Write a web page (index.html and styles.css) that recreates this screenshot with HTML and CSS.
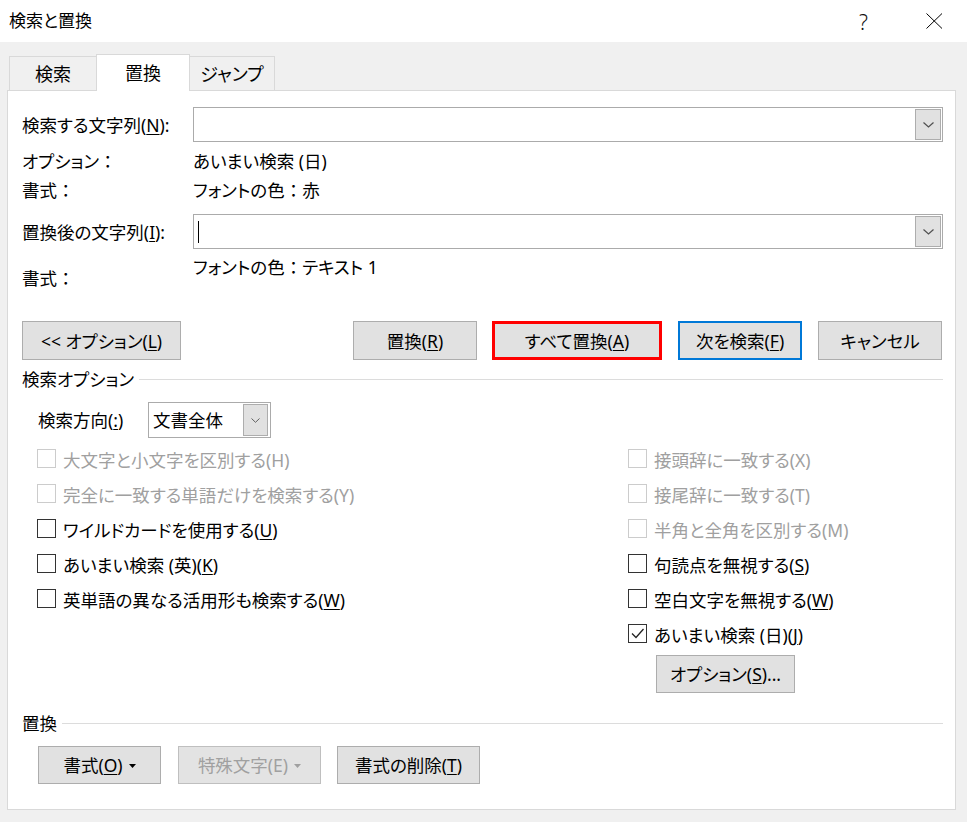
FILE: index.html
```html
<!DOCTYPE html>
<html lang="ja">
<head>
<meta charset="utf-8">
<title>検索と置換</title>
<link rel="stylesheet" href="styles.css">
</head>
<body>
<div class="titlebar">
  <span class="title">検索と置換</span>
  <span class="help">?</span>
  <span class="close"><svg width="17" height="16" viewBox="0 0 17 16"><path d="M0.5 0.5L16 15.5M16 0.5L0.5 15.5" stroke="#000" stroke-width="1" fill="none"/></svg></span>
</div>
<div class="tabs">
  <div class="tab">検索</div>
  <div class="tab active">置換</div>
  <div class="tab">ジャンプ</div>
</div>
<div class="panel">
  <div class="row row-input">
    <span class="lbl">検索する文字列(<u>N</u>):</span>
    <div class="combo"><span class="combo-text"></span><span class="dd"><svg width="11" height="6" viewBox="0 0 11 6"><path d="M0.5 0.5L5.5 5L10.5 0.5" stroke="#505050" stroke-width="1.2" fill="none"/></svg></span></div>
  </div>
  <div class="row row-info first">
    <span class="lbl">オプション<span class="colon">：</span></span>
    <span class="val">あいまい検索 (日)</span>
  </div>
  <div class="row row-info">
    <span class="lbl">書式<span class="colon">：</span></span>
    <span class="val">フォントの色<span class="colon">：</span>赤</span>
  </div>
  <div class="row row-input second">
    <span class="lbl">置換後の文字列(<u>I</u>):</span>
    <div class="combo"><span class="combo-text"><span class="caret"></span></span><span class="dd"><svg width="11" height="6" viewBox="0 0 11 6"><path d="M0.5 0.5L5.5 5L10.5 0.5" stroke="#505050" stroke-width="1.2" fill="none"/></svg></span></div>
  </div>
  <div class="row row-format">
    <span class="lbl">書式<span class="colon">：</span></span>
    <span class="val">フォントの色<span class="colon">：</span>テキスト 1</span>
  </div>

  <div class="actions">
    <button class="btn btn-opt">&lt;&lt; オプション(<u>L</u>)</button>
    <div class="actions-right">
      <button class="btn btn-rep">置換(<u>R</u>)</button>
      <button class="btn btn-all">すべて置換(<u>A</u>)</button>
      <button class="btn btn-default">次を検索(<u>F</u>)</button>
      <button class="btn">キャンセル</button>
    </div>
  </div>

  <div class="section"><span>検索オプション</span></div>

  <div class="direction">
    <span class="dir-lbl">検索方向(<u>:</u>)</span>
    <div class="select"><span class="select-text">文書全体</span><span class="dd dd-small"><svg width="9" height="5" viewBox="0 0 9 5"><path d="M0.5 0.5L4.5 4.3L8.5 0.5" stroke="#606060" stroke-width="1" fill="none"/></svg></span></div>
  </div>

  <div class="options">
    <div class="col col-left">
      <div class="chk disabled"><span class="box"></span><span class="txt">大文字と小文字を区別する(H)</span></div>
      <div class="chk disabled"><span class="box"></span><span class="txt">完全に一致する単語だけを検索する(Y)</span></div>
      <div class="chk"><span class="box"></span><span class="txt">ワイルドカードを使用する(<u>U</u>)</span></div>
      <div class="chk"><span class="box"></span><span class="txt">あいまい検索 (英)(<u>K</u>)</span></div>
      <div class="chk"><span class="box"></span><span class="txt">英単語の異なる活用形も検索する(<u>W</u>)</span></div>
    </div>
    <div class="col col-right">
      <div class="chk disabled"><span class="box"></span><span class="txt">接頭辞に一致する(X)</span></div>
      <div class="chk disabled"><span class="box"></span><span class="txt">接尾辞に一致する(T)</span></div>
      <div class="chk disabled"><span class="box"></span><span class="txt">半角と全角を区別する(M)</span></div>
      <div class="chk"><span class="box"></span><span class="txt">句読点を無視する(<u>S</u>)</span></div>
      <div class="chk"><span class="box"></span><span class="txt">空白文字を無視する(<u>W</u>)</span></div>
      <div class="chk"><span class="box checked"><svg width="17" height="17" viewBox="0 0 17 17"><path d="M3 8.5L7 12.5L14.5 4" stroke="#222" stroke-width="1.3" fill="none"/></svg></span><span class="txt">あいまい検索 (日)(<u>J</u>)</span></div>
      <button class="btn btn-sub">オプション(<u>S</u>)...</button>
    </div>
  </div>

  <div class="section section-replace"><span>置換</span></div>

  <div class="bottom">
    <button class="btn btn-b1">書式(<u>O</u>)<svg class="tri" width="7" height="4" viewBox="0 0 7 4"><path d="M0 0H7L3.5 4Z" fill="#000"/></svg></button>
    <button class="btn btn-b2 btn-disabled">特殊文字(E)<svg class="tri" width="7" height="4" viewBox="0 0 7 4"><path d="M0 0H7L3.5 4Z" fill="#a0a0a0"/></svg></button>
    <button class="btn btn-b3">書式の削除(<u>T</u>)</button>
  </div>
</div>
</body>
</html>
```
FILE: styles.css
```css
* { box-sizing: border-box; }
html, body { margin: 0; padding: 0; }
body {
  width: 967px;
  height: 822px;
  overflow: hidden;
  background: #f0f0f0;
  font-family: "Noto Sans", "Noto Sans CJK JP", sans-serif;
  font-size: 17.5px;
  line-height: 24px;
  color: #000;
  font-feature-settings: "palt";
}
u { text-decoration-thickness: 1px; text-underline-offset: 2px; }
.colon { font-feature-settings: normal; font-family: "Noto Sans CJK JP", sans-serif; }
.txt { letter-spacing: 0; }

/* title bar */
.titlebar {
  height: 42px;
  background: #fff;
  display: flex;
  align-items: center;
  padding-left: 9px;
}
.title { flex: 1; font-size: 17px; }
.help { width: 10px; font-size: 21px; font-weight: 300; margin-right: 57px; color: #111; margin-top: 1px; }
.close { display: flex; margin-right: 24px; }

/* tabs */
.tabs {
  height: 48px;
  display: flex;
  align-items: flex-end;
  padding-left: 9px;
}
.tab {
  height: 34px;
  width: 88px;
  border: 1px solid #d9d9d9;
  border-bottom: none;
  display: flex;
  align-items: center;
  justify-content: center;
  background: #f0f0f0;
  padding-top: 1px;
  font-size: 18px;
}
.tab + .tab { margin-left: -1px; }
.tab.active {
  width: 94px;
  height: 37px;
  background: #fff;
  margin-bottom: -1px;
  position: relative;
  z-index: 1;
  padding-top: 0;
}
.tab:last-child { width: 86px; }

/* panel */
.panel {
  margin-left: 7px;
  width: 949px;
  height: 720px;
  background: #fff;
  border: 1px solid #d9d9d9;
  padding: 16px 12px 0 14px;
}
.row { display: flex; align-items: center; }
.lbl { width: 171px; flex: none; }
.row-input { height: 35px; }
.row-input.second { margin-top: 10px; }
.row-info { height: 29px; }
.row-info.first { margin-top: 4px; }
.row-format { height: 41px; align-items: flex-start; }
.row-format .lbl { margin-top: 17px; }
.row-format .val { margin-top: 6px; }

.combo {
  flex: 1;
  height: 35px;
  border: 1px solid #ababab;
  display: flex;
  align-items: stretch;
  padding: 1px;
}
.combo-text { flex: 1; display: flex; align-items: center; padding-left: 3px; }
.caret { width: 1px; height: 22px; background: #000; }
.dd {
  width: 26px;
  background: #e1e1e1;
  border: 1px solid #adadad;
  display: flex;
  align-items: center;
  justify-content: center;
}

/* action buttons */
.btn {
  font: inherit;
  color: #000;
  background: #e1e1e1;
  border: 1px solid #adadad;
  padding: 0;
  margin: 0;
  display: flex;
  align-items: center;
  justify-content: center;
  white-space: nowrap;
}
.actions {
  margin-top: 31px;
  height: 39px;
  display: flex;
  justify-content: space-between;
}
.actions .btn { height: 39px; }
.btn-opt { width: 159px; }
.actions-right { display: flex; gap: 16px; margin-right: 1px; }
.actions-right .btn { width: 124px; }
.actions-right .btn-rep { margin-right: -1px; }
.actions-right .btn-all { width: 170px; border: 3px solid #ff0000; }
.actions-right .btn-default { border: 2px solid #0078d7; }

/* section headers */
.section {
  margin-top: 7px;
  height: 24px;
  display: flex;
  align-items: center;
  gap: 5px;
}
.section::after {
  content: "";
  flex: 1;
  height: 1px;
  background: #dcdcdc;
}
.section-replace { margin-top: 18px; }

/* direction */
.direction {
  margin-top: 11px;
  height: 36px;
  display: flex;
  align-items: center;
  padding-left: 16px;
}
.dir-lbl { width: 110px; }
.select {
  width: 123px;
  height: 36px;
  border: 1px solid #ababab;
  padding: 1px 2px 1px 1px;
  display: flex;
  align-items: stretch;
}
.select-text { flex: 1; display: flex; align-items: center; padding-left: 3px; }
.dd-small { width: 25px; }

/* options */
.options {
  margin-top: 4px;
  display: flex;
  padding-left: 15px;
}
.col { display: flex; flex-direction: column; }
.col-left { width: 591px; }
.chk {
  height: 35px;
  display: flex;
  align-items: center;
  gap: 7px;
  white-space: nowrap;
}
.chk .box {
  width: 19px;
  height: 19px;
  border: 1px solid #333;
  background: #fff;
  flex: none;
  display: flex;
  align-items: center;
  justify-content: center;
  margin-top: -2px;
}
.chk.disabled { color: #a0a0a0; }
.chk.disabled .box { border-color: #cccccc; }
.btn-sub {
  margin-top: 3px;
  margin-left: 28px;
  width: 139px;
  height: 38px;
}

/* bottom buttons */
.bottom {
  margin-top: 11px;
  display: flex;
  gap: 17px;
  padding-left: 16px;
}
.bottom .btn { height: 38px; }
.btn-b1 { width: 123px; }
.btn-b2 { width: 143px; margin-right: -1px; }
.btn-b3 { width: 143px; }
.tri { margin-left: 6px; margin-top: 1px; }
.btn-disabled { color: #a0a0a0; border-color: #bfbfbf; background: #e3e3e3; }
```
